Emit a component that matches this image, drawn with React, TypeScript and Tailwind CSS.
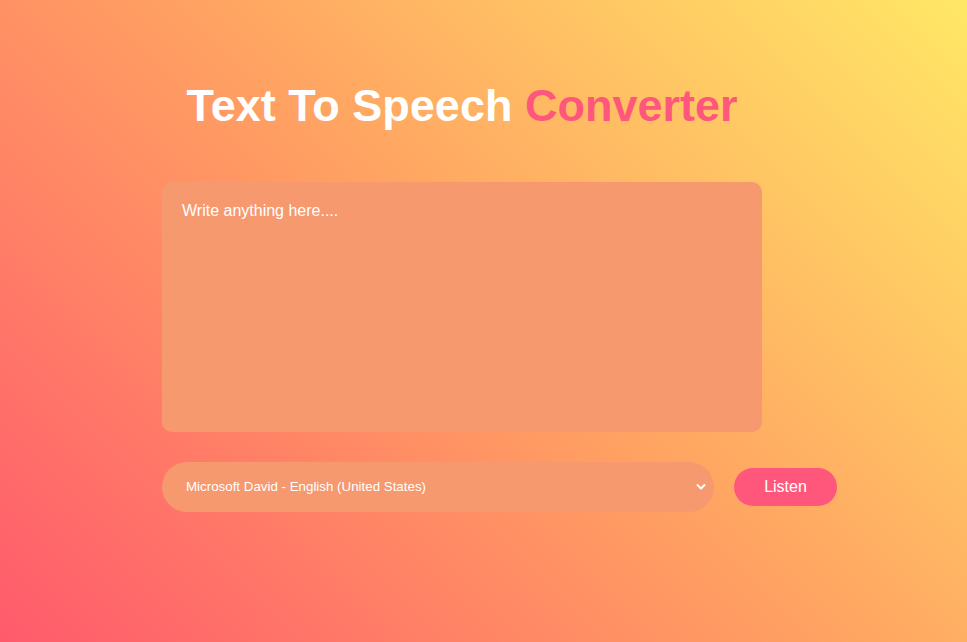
import React from "react";

export default function App() {
  return (
    <div
      className="w-[967px] h-[642px] overflow-hidden bg-[linear-gradient(45deg,#ff5a6c_0%,#ffa062_50%,#ffe866_100%)]"
      style={{ fontFamily: '"Liberation Sans", Arial, sans-serif' }}
    >
      <div className="ml-[162px] pt-[80px] w-[675px]">
        <h1 className="w-[600px] text-center text-[45px] leading-[52px] font-bold text-white">
          Text To Speech <span className="text-[#ff577c]">Converter</span>
        </h1>
        <textarea
          placeholder="Write anything here...."
          className="mt-[50px] block w-[600px] h-[250px] resize-none rounded-[10px] bg-[#f6996f] px-[20px] pt-[17px] pb-[19px] text-[16px] text-white placeholder:text-white outline-none"
        />
        <div className="mt-[30px] flex items-center gap-[20px]">
          <div className="relative w-[552px] h-[50px]">
            <select className="appearance-none w-full h-full rounded-full bg-[#f6996f] pl-[24px] pr-[40px] text-[13.33px] text-white outline-none">
              <option>Microsoft David - English (United States)</option>
            </select>
            <svg
              className="absolute right-[8px] top-[21px] pointer-events-none"
              width="10"
              height="8"
              viewBox="0 0 10 8"
              fill="none"
            >
              <path d="M1.5 2l3.5 3.5L8.5 2" stroke="white" strokeWidth="2" strokeLinecap="round" strokeLinejoin="round" />
            </svg>
          </div>
          <button className="w-[103px] h-[38px] rounded-full bg-[#ff577c] text-white text-[16px]">
            Listen
          </button>
        </div>
      </div>
    </div>
  );
}
